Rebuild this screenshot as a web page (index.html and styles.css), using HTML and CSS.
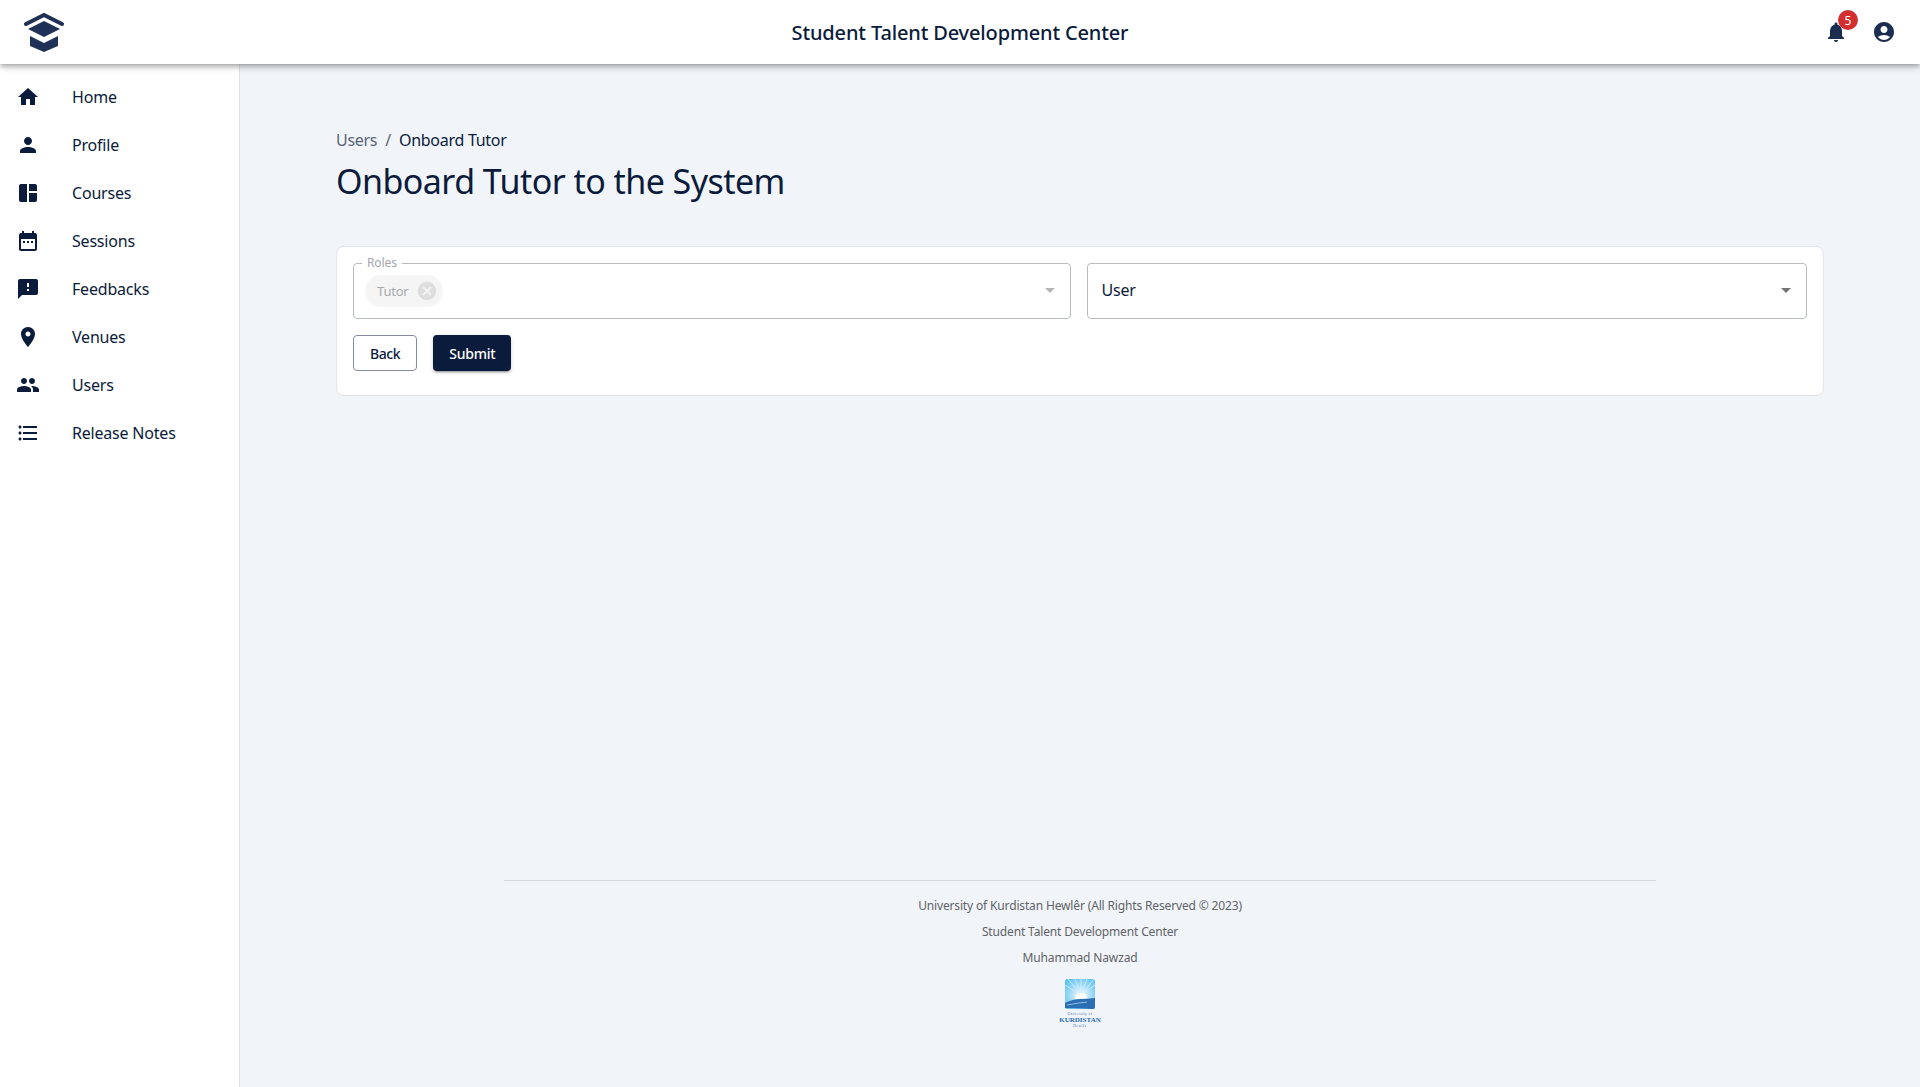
FILE: index.html
```html
<!DOCTYPE html>
<html>

<head>
    <meta charset="utf-8">
    <title>Student Talent Development Center</title>
    <link rel="stylesheet" href="styles.css">
</head>

<body>

    <header class="topbar">
        <svg class="brand" viewBox="0 0 88 64">
            <path d="M26 24L44 15l18 9" class="brand-line" />
            <path d="M28 29l16-8 16 8-16 8z" />
            <path d="M30 36l14 7 14-7v10l-14 6-14-6z" />
        </svg>
        <div class="topbar-title">Student Talent Development Center</div>
        <div class="topbar-actions">
            <span class="bell">
                <svg class="icon" viewBox="0 0 24 24">
                    <path d="M12 22c1.1 0 2-.9 2-2h-4c0 1.1.89 2 2 2zm6-6v-5c0-3.07-1.64-5.64-4.5-6.32V4c0-.83-.67-1.5-1.5-1.5s-1.5.67-1.5 1.5v.68C7.63 5.36 6 7.92 6 11v5l-2 2v1h16v-1l-2-2z" />
                </svg>
                <span class="badge">5</span>
            </span>
            <svg class="icon" viewBox="0 0 24 24">
                <path d="M12 2C6.48 2 2 6.48 2 12s4.48 10 10 10 10-4.48 10-10S17.52 2 12 2zm0 4c1.93 0 3.5 1.57 3.5 3.5S13.93 13 12 13s-3.5-1.57-3.5-3.5S10.07 6 12 6zm0 14c-2.03 0-4.43-.82-6.14-2.88C7.55 15.8 9.68 15 12 15s4.45.8 6.14 2.12C16.43 19.18 14.03 20 12 20z" />
            </svg>
        </div>
    </header>

    <div class="layout">
        <nav class="sidebar">
            <a class="nav-item">
                <svg class="icon" viewBox="0 0 24 24"><path d="M10 20v-6h4v6h5v-8h3L12 3 2 12h3v8z" /></svg>
                <span>Home</span>
            </a>
            <a class="nav-item">
                <svg class="icon" viewBox="0 0 24 24"><path d="M12 12c2.21 0 4-1.79 4-4s-1.79-4-4-4-4 1.79-4 4 1.79 4 4 4zm0 2c-2.67 0-8 1.34-8 4v2h16v-2c0-2.66-5.33-4-8-4z" /></svg>
                <span>Profile</span>
            </a>
            <a class="nav-item">
                <svg class="icon" viewBox="0 0 24 24"><path d="M11 21H5c-1.1 0-2-.9-2-2V5c0-1.1.9-2 2-2h6v18zm2 0h6c1.1 0 2-.9 2-2v-7h-8v9zm8-11V5c0-1.1-.9-2-2-2h-6v7h8z" /></svg>
                <span>Courses</span>
            </a>
            <a class="nav-item">
                <svg class="icon" viewBox="0 0 24 24"><path d="M19 4h-1V2h-2v2H8V2H6v2H5c-1.11 0-1.99.9-1.99 2L3 20c0 1.1.89 2 2 2h14c1.1 0 2-.9 2-2V6c0-1.1-.9-2-2-2zm0 16H5V10h14v10zM9 14H7v-2h2v2zm4 0h-2v-2h2v2zm4 0h-2v-2h2v2z" /></svg>
                <span>Sessions</span>
            </a>
            <a class="nav-item">
                <svg class="icon" viewBox="0 0 24 24"><path d="M20 2H4c-1.1 0-1.99.9-1.99 2L2 22l4-4h14c1.1 0 2-.9 2-2V4c0-1.1-.9-2-2-2zm-7 12h-2v-2h2v2zm0-4h-2V6h2v4z" /></svg>
                <span>Feedbacks</span>
            </a>
            <a class="nav-item">
                <svg class="icon" viewBox="0 0 24 24"><path d="M12 2C8.13 2 5 5.13 5 9c0 5.25 7 13 7 13s7-7.75 7-13c0-3.87-3.13-7-7-7zm0 9.5c-1.38 0-2.5-1.12-2.5-2.5s1.12-2.5 2.5-2.5 2.5 1.12 2.5 2.5-1.12 2.5-2.5 2.5z" /></svg>
                <span>Venues</span>
            </a>
            <a class="nav-item">
                <svg class="icon" viewBox="0 0 24 24"><path d="M16 11c1.66 0 2.99-1.34 2.99-3S17.66 5 16 5c-1.66 0-3 1.34-3 3s1.34 3 3 3zm-8 0c1.66 0 2.99-1.34 2.99-3S9.66 5 8 5C6.34 5 5 6.34 5 8s1.34 3 3 3zm0 2c-2.33 0-7 1.17-7 3.5V19h14v-2.5c0-2.33-4.67-3.5-7-3.5zm8 0c-.29 0-.62.02-.97.05 1.16.84 1.97 1.97 1.97 3.45V19h6v-2.5c0-2.33-4.67-3.5-7-3.5z" /></svg>
                <span>Users</span>
            </a>
            <a class="nav-item">
                <svg class="icon" viewBox="0 0 24 24"><path d="M4 10.5c-.83 0-1.5.67-1.5 1.5s.67 1.5 1.5 1.5 1.5-.67 1.5-1.5-.67-1.5-1.5-1.5zm0-6c-.83 0-1.5.67-1.5 1.5S3.17 7.5 4 7.5 5.5 6.83 5.5 6 4.83 4.5 4 4.5zm0 12c-.83 0-1.5.68-1.5 1.5s.68 1.5 1.5 1.5 1.5-.68 1.5-1.5-.67-1.5-1.5-1.5zM7 19h14v-2H7v2zm0-6h14v-2H7v2zm0-8v2h14V5H7z" /></svg>
                <span>Release Notes</span>
            </a>
        </nav>

        <main class="main">
            <div class="page">
                <div class="breadcrumb">
                    <span class="crumb-link">Users</span>
                    <span class="crumb-sep">/</span>
                    <span>Onboard Tutor</span>
                </div>
                <h1 class="page-title">Onboard Tutor to the System</h1>

                <div class="card">
                    <div class="fields">
                        <div class="field field-disabled">
                            <span class="field-label">Roles</span>
                            <span class="chip">
                                Tutor
                                <svg class="chip-icon" viewBox="0 0 24 24"><path d="M12 2C6.47 2 2 6.47 2 12s4.47 10 10 10 10-4.47 10-10S17.53 2 12 2zm5 13.59L15.59 17 12 13.41 8.41 17 7 15.59 10.59 12 7 8.41 8.41 7 12 10.59 15.59 7 17 8.41 13.41 12 17 15.59z" /></svg>
                            </span>
                            <span class="caret"></span>
                        </div>
                        <div class="field">
                            <span class="field-value">User</span>
                            <span class="caret"></span>
                        </div>
                    </div>
                    <div class="buttons">
                        <button class="button button-outline">Back</button>
                        <button class="button button-primary">Submit</button>
                    </div>
                </div>
            </div>

            <footer class="footer">
                <p>University of Kurdistan Hewlêr (All Rights Reserved © 2023)</p>
                <p>Student Talent Development Center</p>
                <p>Muhammad Nawzad</p>
                <div class="uni-logo">
                    <svg class="uni-mark" viewBox="0 0 30 30">
                        <defs>
                            <radialGradient id="sky" cx="0.53" cy="0.55" r="0.65">
                                <stop offset="0.1" stop-color="#e6f6fd" />
                                <stop offset="1" stop-color="#62c2f2" />
                            </radialGradient>
                        </defs>
                        <rect width="30" height="30" rx="2" fill="url(#sky)" />
                        <path d="M16 16L3 0M16 16L10 0M16 16V0M16 16L22 0M16 16L29 0M16 16L0 6M16 16L30 6" stroke="#d9f1fc" stroke-width="0.7" />
                        <ellipse cx="16" cy="18" rx="6" ry="4" fill="#fff" />
                        <path d="M0 24q8-4 15-4t15-1v9a2 2 0 0 1-2 2L0 29z" fill="#2a6db3" />
                        <path d="M2 26l12-2 8-1" stroke="#bfe0f4" stroke-width="0.7" fill="none" />
                    </svg>
                    <span class="uni-small">University of</span>
                    <span class="uni-name">KURDISTAN</span>
                    <span class="uni-small">Hewlêr</span>
                </div>
            </footer>
        </main>
    </div>

</body>

</html>
```

FILE: styles.css
```css
* {
    box-sizing: border-box;
}

body {
    font-family: "Noto Sans", "Open Sans", sans-serif;
    margin: 0;
    background-color: #f1f4f9;
    color: #0b1b3b;
    height: 1087px;
    display: flex;
    flex-direction: column;
    overflow: hidden;
}

.icon {
    width: 24px;
    height: 24px;
    fill: #0b1b3b;
    flex-shrink: 0;
}

/* top bar */
.topbar {
    height: 64px;
    flex-shrink: 0;
    background-color: #ffffff;
    display: flex;
    align-items: center;
    justify-content: space-between;
    box-shadow: 0 2px 4px -1px rgba(0, 0, 0, 0.2), 0 4px 5px rgba(0, 0, 0, 0.14), 0 1px 10px rgba(0, 0, 0, 0.12);
    position: relative;
    z-index: 2;
}

.brand {
    width: 88px;
    height: 64px;
    margin-right: 8px;
    fill: #1f3157;
}

.brand-line {
    fill: none;
    stroke: #1f3157;
    stroke-width: 4;
    stroke-linecap: round;
}

.topbar-title {
    font-size: 20px;
    font-weight: 500;
    letter-spacing: -0.15px;
    flex: 1;
    text-align: center;
}

.topbar-actions {
    display: flex;
    align-items: center;
    gap: 24px;
    padding-right: 24px;
}

.topbar-actions .icon {
    fill: #1c2d52;
}

.bell {
    position: relative;
    display: flex;
}

.badge {
    position: absolute;
    top: -10px;
    right: -10px;
    width: 20px;
    height: 20px;
    border-radius: 50%;
    background-color: #d32f2f;
    color: #ffffff;
    font-size: 12px;
    display: flex;
    align-items: center;
    justify-content: center;
}

/* sidebar */
.layout {
    flex: 1;
    display: flex;
    min-height: 0;
}

.sidebar {
    width: 240px;
    flex-shrink: 0;
    background-color: #ffffff;
    border-right: 1px solid #dfe3e8;
    padding-top: 9px;
}

.nav-item {
    height: 48px;
    display: flex;
    align-items: center;
    padding-left: 16px;
    gap: 32px;
    font-size: 16px;
    letter-spacing: -0.2px;
}

/* main */
.main {
    flex: 1;
    min-width: 0;
    display: flex;
    flex-direction: column;
}

.page {
    flex: 1;
    padding: 64px 96px 0;
}

.breadcrumb {
    display: flex;
    gap: 8px;
    font-size: 16px;
    line-height: 24px;
    letter-spacing: -0.28px;
}

.crumb-link,
.crumb-sep {
    color: #5c6577;
}

.page-title {
    font-size: 34px;
    font-weight: 400;
    line-height: 48px;
    letter-spacing: -0.55px;
    margin: 5px 0 41px;
}

.card {
    background-color: #ffffff;
    border: 1px solid #e2e5ea;
    border-radius: 8px;
    padding: 16px;
    height: 150px;
}

.fields {
    display: flex;
    gap: 16px;
}

.field {
    flex: 1;
    height: 56px;
    border: 1px solid #b8bbc0;
    border-radius: 4px;
    position: relative;
    display: flex;
    align-items: center;
    padding-left: 14px;
}

.field-disabled {
    padding-left: 11px;
}

.field-label {
    position: absolute;
    top: -8px;
    left: 8px;
    padding: 0 5px;
    background-color: #ffffff;
    color: #a3a6ab;
    font-size: 12px;
    line-height: 14px;
    letter-spacing: -0.1px;
}

.field-value {
    font-size: 16px;
    letter-spacing: -0.2px;
    padding-bottom: 2px;
}

.chip {
    height: 32px;
    border-radius: 16px;
    background-color: #f5f5f5;
    color: #a8aaae;
    font-size: 13px;
    letter-spacing: -0.2px;
    display: inline-flex;
    align-items: center;
    gap: 7px;
    padding: 0 5px 0 12px;
}

.chip-icon {
    width: 22px;
    height: 22px;
    fill: #dedede;
}

.caret {
    position: absolute;
    right: 15px;
    top: 24px;
    border-left: 5px solid transparent;
    border-right: 5px solid transparent;
    border-top: 5px solid #757575;
}

.field-disabled .caret {
    border-top-color: #b5b5b5;
}

.buttons {
    display: flex;
    gap: 16px;
    margin-top: 16px;
}

.button {
    height: 36px;
    font-family: inherit;
    font-size: 14px;
    font-weight: 500;
    letter-spacing: -0.4px;
    border-radius: 4px;
    padding: 0 16px;
}

.button-outline {
    background-color: #ffffff;
    color: #0b1b3b;
    border: 1px solid #858d9d;
}

.button-primary {
    background-color: #0b1b3b;
    color: #ffffff;
    border: none;
    letter-spacing: -0.25px;
    box-shadow: 0 3px 1px -2px rgba(0, 0, 0, 0.2), 0 2px 2px rgba(0, 0, 0, 0.14), 0 1px 5px rgba(0, 0, 0, 0.12);
}

/* footer */
.footer {
    width: 1152px;
    margin: 0 auto;
    height: 207px;
    border-top: 1px solid #d5d9de;
    padding-top: 16px;
    text-align: center;
    color: #5f6368;
    font-size: 12px;
    letter-spacing: -0.15px;
    flex-shrink: 0;
}

.footer p {
    margin: 0 0 8px;
    line-height: 18px;
}

.uni-logo {
    display: flex;
    flex-direction: column;
    align-items: center;
    color: #2a6db3;
    font-family: "Liberation Serif", serif;
    letter-spacing: 0;
    margin-top: 12px;
}

.uni-mark {
    width: 30px;
    height: 30px;
    margin-bottom: 3px;
}

.uni-small {
    font-size: 3.5px;
    line-height: 5px;
    letter-spacing: 0.5px;
}

.uni-name {
    font-size: 7px;
    font-weight: 700;
    line-height: 7px;
}
```
